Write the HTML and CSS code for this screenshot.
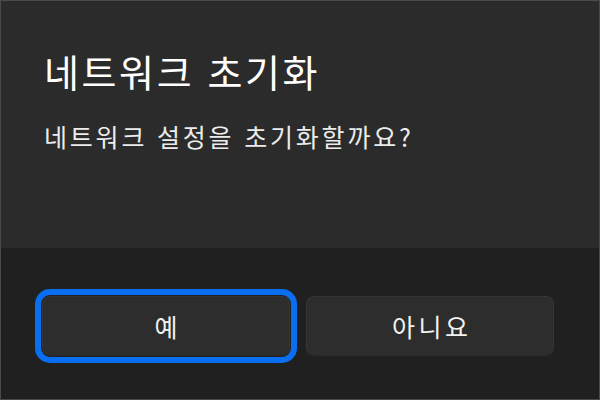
FILE: index.html
```html
<!DOCTYPE html>
<html lang="ko">
<head>
  <meta charset="utf-8">
  <title>네트워크 초기화</title>
  <link rel="stylesheet" href="styles.css">
</head>
<body>
  <div class="dialog">
    <section class="content">
      <h1>네트워크 초기화</h1>
      <p>네트워크 설정을 초기화할까요?</p>
    </section>
    <footer class="actions">
      <button class="btn focused">예</button>
      <button class="btn">아니요</button>
    </footer>
  </div>
</body>
</html>
```

FILE: styles.css
```css
* { box-sizing: border-box; }
body { margin: 0; background: #202020; font-family: "Noto Sans CJK KR", "Noto Sans", sans-serif; }
.dialog { width: 600px; height: 400px; border: 1px solid #4a4a4a; display: flex; flex-direction: column; background: #202020; }
.content { height: 247px; background: #2b2b2b; padding: 47px 43px 0; }
.content h1 { margin: 0; font-size: 38px; line-height: 46px; font-weight: 400; letter-spacing: 2.6px; color: #fff; }
.content p { margin: 26px 0 0; font-size: 25px; line-height: 32px; font-weight: 400; letter-spacing: 2.8px; color: #ececec; }
.actions { flex: 1; display: flex; gap: 16px; padding: 48px 45px 0 41px; }
.btn { width: 248px; height: 60px; border-radius: 8px; background: #2d2d2d; border: 1px solid #353535; border-bottom-color: #2a2a2a; color: #f2f2f2; font-family: inherit; font-size: 25px; font-weight: 400; letter-spacing: 3.5px; padding: 0 0 0 3.5px; }
.btn.focused { outline: 6px solid #0a6ef0; outline-offset: 1px; }
```
